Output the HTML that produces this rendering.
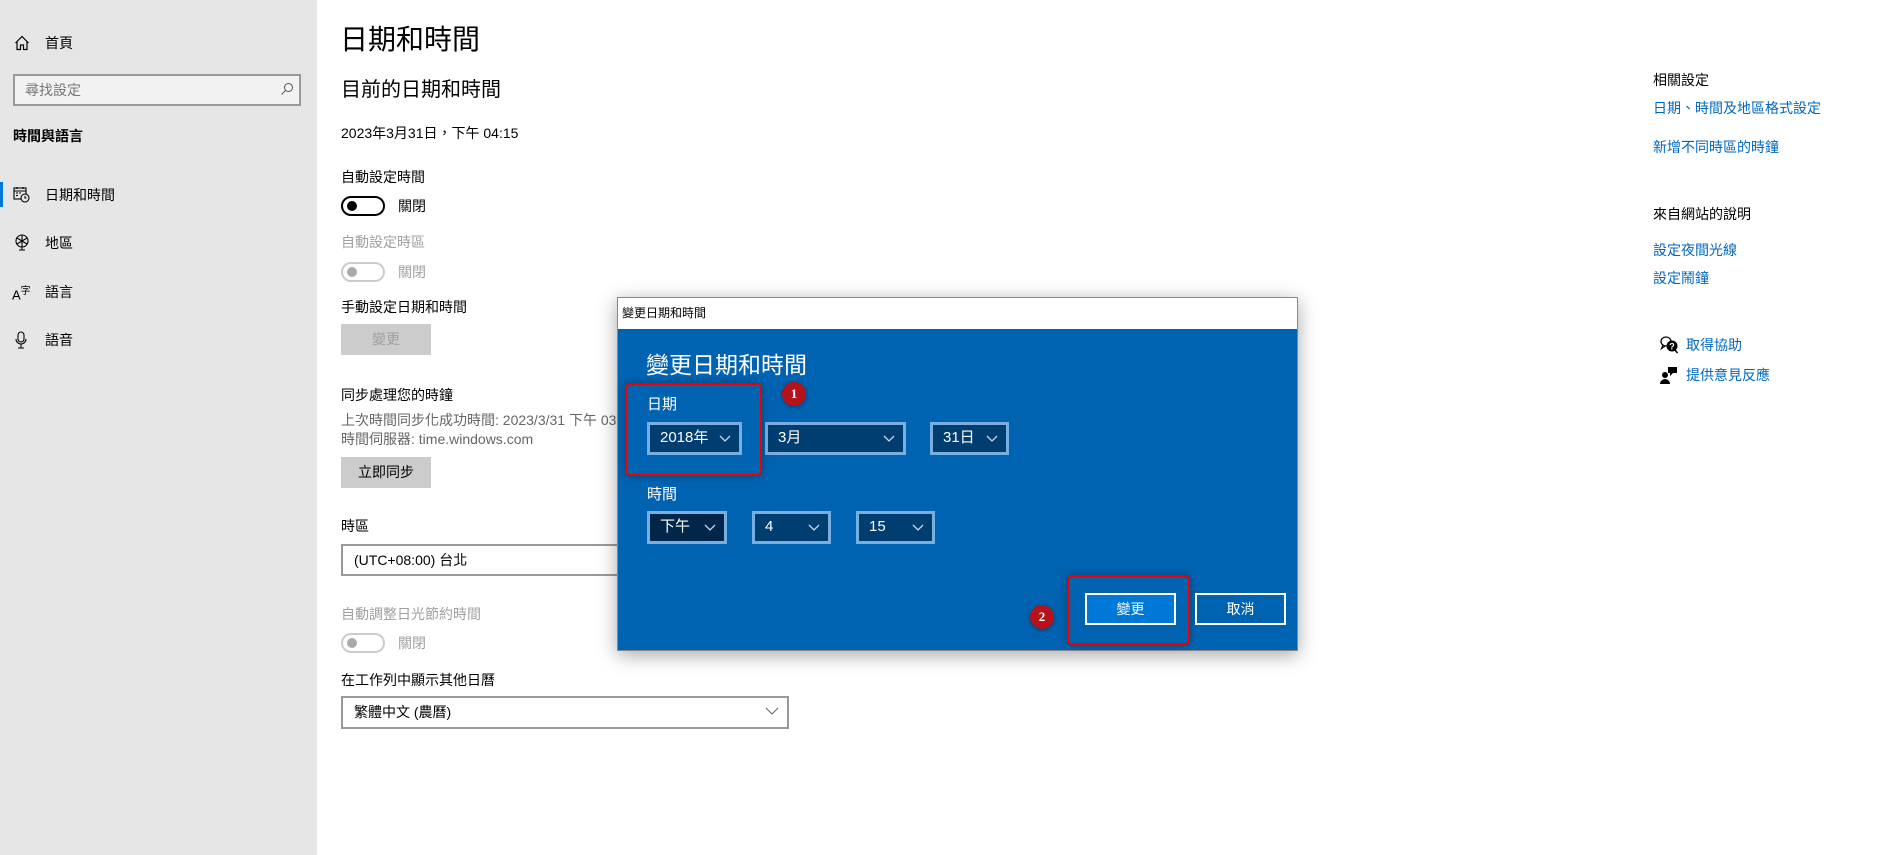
<!DOCTYPE html>
<html><head><meta charset="utf-8"><style>
*{margin:0;padding:0;box-sizing:border-box}
body{width:1900px;height:855px;position:relative;background:#fff;overflow:hidden;font-family:"Liberation Sans","Noto Sans CJK TC",sans-serif;font-size:14px;color:#000}
.a{position:absolute;white-space:nowrap;line-height:20px}
.side{position:absolute;left:0;top:0;width:317px;height:855px;background:#e6e6e6}
.g{color:#a0a0a0}
.tog{position:absolute;width:44px;height:20px;border:2px solid #000;border-radius:10px}
.tog:after{content:"";position:absolute;left:4px;top:3px;width:10px;height:10px;border-radius:50%;background:#000}
.tog.d{border-color:#ccc}.tog.d:after{background:#aaa}
.btn{position:absolute;background:#ccc;text-align:center;line-height:31px}
.box{position:absolute;border:2px solid #999;background:#fff;line-height:28px;padding-left:11px}
.lnk{color:#0067c0}
.dlg{position:absolute;left:617px;top:297px;width:681px;height:354px;background:#0063b1;border:1px solid #888;box-shadow:0 4px 18px rgba(0,0,0,.35)}
.dd{position:absolute;border:3px solid #79aee0;background:#003d70;color:#fff;font-size:15px;line-height:26px;padding-left:10px}
.dd svg{position:absolute;right:8px;top:10px}
.red{position:absolute;border:2px solid #e00;border-radius:5px;box-shadow:0 0 8px rgba(0,0,0,.35)}
.bdg{position:absolute;width:24px;height:24px;border-radius:50%;background:#b5121b;color:#fff;font:bold 13px/24px "Liberation Serif",serif;text-align:center;box-shadow:0 1px 4px rgba(0,0,0,.4)}
.ic{position:absolute}
</style></head><body>
<div class="side"></div>
<div style="position:absolute;left:0;top:182px;width:3px;height:25px;background:#0078d7"></div>
<svg class="ic" style="left:14px;top:35px" width="16" height="16" viewBox="0 0 16 16" fill="none" stroke="#000" stroke-width="1.2"><path d="M1.5 8 8 1.5 14.5 8M3 6.5V14.5h3.5V10h3v4.5H13V6.5"/></svg>
<div class="a" style="left:45px;top:33px">首頁</div>
<div style="position:absolute;left:13px;top:74px;width:288px;height:32px;border:2px solid #999;background:#f2f2f2"></div>
<div class="a" style="left:25px;top:80px;color:#777">尋找設定</div>
<svg class="ic" style="left:280px;top:82px" width="14" height="14" viewBox="0 0 14 14" fill="none" stroke="#555" stroke-width="1"><circle cx="8.5" cy="5.5" r="4"/><path d="M5.5 8.5 1.5 12.5"/></svg>
<div class="a" style="left:13px;top:126px;font-weight:bold">時間與語言</div>
<svg class="ic" style="left:13px;top:186px" width="17" height="17" viewBox="0 0 17 17" fill="none" stroke="#000" stroke-width="1.1"><rect x="1" y="2" width="12" height="11"/><path d="M1 5h12M4 1v2M10 1v2M3 7h2M6 7h2M3 9.5h2"/><circle cx="12" cy="12" r="4" fill="#e6e6e6"/><path d="M12 10v2h1.5"/></svg>
<div class="a" style="left:45px;top:185px">日期和時間</div>
<svg class="ic" style="left:14px;top:234px" width="16" height="18" viewBox="0 0 16 18" fill="none" stroke="#000" stroke-width="1.1"><circle cx="8" cy="7" r="6"/><path d="M3 4l10 6M3 10l10-6M8 1v12M5 16h6M8 13v3"/></svg>
<div class="a" style="left:45px;top:233px">地區</div>
<div class="a" style="left:12px;top:282px;font-size:13px">A<sup style="font-size:10px">字</sup></div>
<div class="a" style="left:45px;top:282px">語言</div>
<svg class="ic" style="left:15px;top:331px" width="12" height="18" viewBox="0 0 12 18" fill="none" stroke="#000" stroke-width="1.1"><rect x="3" y="1" width="6" height="10" rx="3"/><path d="M1 8a5 5 0 0 0 10 0M6 13v4M3 17h6"/></svg>
<div class="a" style="left:45px;top:330px">語音</div>

<div class="a" style="left:340px;top:22px;font-size:28px;line-height:36px">日期和時間</div>
<div class="a" style="left:341px;top:76px;font-size:20px;line-height:28px">目前的日期和時間</div>
<div class="a" style="left:341px;top:123px">2023年3月31日，下午 04:15</div>
<div class="a" style="left:341px;top:167px">自動設定時間</div>
<div class="tog" style="left:341px;top:196px"></div>
<div class="a" style="left:398px;top:196px">關閉</div>
<div class="a g" style="left:341px;top:232px">自動設定時區</div>
<div class="tog d" style="left:341px;top:262px"></div>
<div class="a g" style="left:398px;top:262px">關閉</div>
<div class="a" style="left:341px;top:297px">手動設定日期和時間</div>
<div class="btn g" style="left:341px;top:324px;width:90px;height:31px">變更</div>
<div class="a" style="left:341px;top:385px">同步處理您的時鐘</div>
<div class="a" style="left:341px;top:410px;color:#666">上次時間同步化成功時間: 2023/3/31 下午 03:53</div>
<div class="a" style="left:341px;top:429px;color:#666">時間伺服器: time.windows.com</div>
<div class="btn" style="left:341px;top:457px;width:90px;height:31px">立即同步</div>
<div class="a" style="left:341px;top:516px">時區</div>
<div class="box" style="left:341px;top:544px;width:448px;height:32px">(UTC+08:00) 台北</div>
<div class="a g" style="left:341px;top:604px">自動調整日光節約時間</div>
<div class="tog d" style="left:341px;top:633px"></div>
<div class="a g" style="left:398px;top:633px">關閉</div>
<div class="a" style="left:341px;top:670px">在工作列中顯示其他日曆</div>
<div class="box" style="left:341px;top:696px;width:448px;height:33px">繁體中文 (農曆)</div>
<svg class="ic" style="left:765px;top:707px" width="14" height="9" viewBox="0 0 14 9" fill="none" stroke="#666"><path d="M1 1l6 6 6-6"/></svg>

<div class="a" style="left:1653px;top:70px">相關設定</div>
<div class="a lnk" style="left:1653px;top:98px">日期、時間及地區格式設定</div>
<div class="a lnk" style="left:1653px;top:137px">新增不同時區的時鐘</div>
<div class="a" style="left:1653px;top:204px">來自網站的說明</div>
<div class="a lnk" style="left:1653px;top:240px">設定夜間光線</div>
<div class="a lnk" style="left:1653px;top:268px">設定鬧鐘</div>
<svg class="ic" style="left:1660px;top:336px" width="20" height="18" viewBox="0 0 20 18"><ellipse cx="6" cy="5.5" rx="5" ry="4.5" fill="none" stroke="#000" stroke-width="1.3"/><path d="M3 9 1.5 12.5 5 10" fill="none" stroke="#000" stroke-width="1.2"/><circle cx="12" cy="10" r="5.5" fill="#000"/><path d="M15 14l2.5 3" stroke="#000" stroke-width="1.5"/><text x="12" y="13.5" font-size="9" fill="#fff" text-anchor="middle" font-family="Liberation Sans" font-weight="bold">?</text></svg>
<div class="a lnk" style="left:1686px;top:335px">取得協助</div>
<svg class="ic" style="left:1660px;top:366px" width="18" height="18" viewBox="0 0 18 18"><circle cx="5" cy="9" r="3" fill="#000"/><path d="M0 18a5 5 0 0 1 10 0z" fill="#000"/><path d="M8 1h9v6h-4l-3 3V7H8z" fill="#000"/></svg>
<div class="a lnk" style="left:1686px;top:365px">提供意見反應</div>

<div class="dlg">
<div style="position:absolute;left:0;top:0;width:679px;height:31px;background:#fff"></div>
<div class="a" style="left:4px;top:5px;font-size:12px">變更日期和時間</div>
<div class="a" style="left:28px;top:52px;color:#fff;font-size:23px;line-height:30px">變更日期和時間</div>
<div class="a" style="left:29px;top:97px;color:#fff;font-size:15px">日期</div>
<div class="dd" style="left:29px;top:124px;width:95px;height:33px">2018年<svg width="12" height="8" viewBox="0 0 12 8" fill="none" stroke="#c8d8e8" stroke-width="1.3"><path d="M1 1l5 5 5-5"/></svg></div>
<div class="dd" style="left:147px;top:124px;width:141px;height:33px">3月<svg width="12" height="8" viewBox="0 0 12 8" fill="none" stroke="#c8d8e8" stroke-width="1.3"><path d="M1 1l5 5 5-5"/></svg></div>
<div class="dd" style="left:312px;top:124px;width:79px;height:33px">31日<svg width="12" height="8" viewBox="0 0 12 8" fill="none" stroke="#c8d8e8" stroke-width="1.3"><path d="M1 1l5 5 5-5"/></svg></div>
<div class="a" style="left:29px;top:187px;color:#fff;font-size:15px">時間</div>
<div class="dd" style="left:29px;top:213px;width:80px;height:33px;background:#002649">下午<svg width="12" height="8" viewBox="0 0 12 8" fill="none" stroke="#c8d8e8" stroke-width="1.3"><path d="M1 1l5 5 5-5"/></svg></div>
<div class="dd" style="left:134px;top:213px;width:79px;height:33px">4<svg width="12" height="8" viewBox="0 0 12 8" fill="none" stroke="#c8d8e8" stroke-width="1.3"><path d="M1 1l5 5 5-5"/></svg></div>
<div class="dd" style="left:238px;top:213px;width:79px;height:33px">15<svg width="12" height="8" viewBox="0 0 12 8" fill="none" stroke="#c8d8e8" stroke-width="1.3"><path d="M1 1l5 5 5-5"/></svg></div>
<div style="position:absolute;left:467px;top:295px;width:91px;height:32px;background:#0078d7;border:2px solid #fff;color:#fff;text-align:center;line-height:28px">變更</div>
<div style="position:absolute;left:577px;top:295px;width:91px;height:32px;border:2px solid #fff;color:#fff;text-align:center;line-height:28px">取消</div>
</div>
<div class="red" style="left:625px;top:383px;width:137px;height:93px"></div>
<div class="bdg" style="left:782px;top:382px">1</div>
<div class="red" style="left:1067px;top:575px;width:123px;height:70px"></div>
<div class="bdg" style="left:1030px;top:605px">2</div>
</body></html>
